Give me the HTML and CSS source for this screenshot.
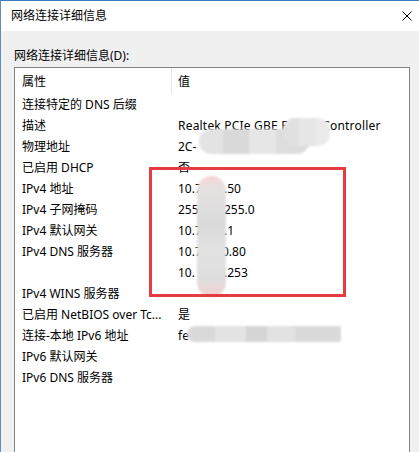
FILE: index.html
```html
<!DOCTYPE html>
<html lang="zh-CN">
<head>
<meta charset="utf-8">
<title>网络连接详细信息</title>
<link rel="stylesheet" href="styles.css">
</head>
<body>
<div class="window">
  <div class="titlebar">
    <span class="title">网络连接详细信息</span>
    <svg class="close" width="10" height="10" viewBox="0 0 10 10"><path d="M0.5 0.5 L9.5 9.5 M9.5 0.5 L0.5 9.5" stroke="#000" stroke-width="1" fill="none"/></svg>
  </div>
  <div class="body">
    <div class="label">网络连接详细信息(D):</div>
    <div class="listbox">
      <div class="header">
        <div class="hcol1">属性</div>
        <div class="hcol2">值</div>
      </div>
      <div class="row"><div class="c1">连接特定的 DNS 后缀</div><div class="c2"></div></div>
      <div class="row"><div class="c1">描述</div><div class="c2 wide">Realtek PCIe GBE Family Controller</div></div>
      <div class="row"><div class="c1">物理地址</div><div class="c2">2C-</div></div>
      <div class="row"><div class="c1">已启用 DHCP</div><div class="c2">否</div></div>
      <div class="row"><div class="c1">IPv4 地址</div><div class="c2"><span class="head">10.7</span><span>.50</span></div></div>
      <div class="row"><div class="c1">IPv4 子网掩码</div><div class="c2"><span class="head">255</span><span>255.0</span></div></div>
      <div class="row"><div class="c1">IPv4 默认网关</div><div class="c2"><span class="head">10.7</span><span>.1</span></div></div>
      <div class="row"><div class="c1">IPv4 DNS 服务器</div><div class="c2"><span class="head">10.7</span><span class="tail-wide">0.80</span></div></div>
      <div class="row"><div class="c1"></div><div class="c2"><span class="head">10.</span><span>.253</span></div></div>
      <div class="row"><div class="c1">IPv4 WINS 服务器</div><div class="c2"></div></div>
      <div class="row"><div class="c1">已启用 NetBIOS over Tc...</div><div class="c2">是</div></div>
      <div class="row"><div class="c1">连接-本地 IPv6 地址</div><div class="c2">fe</div></div>
      <div class="row"><div class="c1">IPv6 默认网关</div><div class="c2"></div></div>
      <div class="row"><div class="c1">IPv6 DNS 服务器</div><div class="c2"></div></div>
    </div>
  </div>

  <div class="blob blob-desc-a"></div>
  <div class="blob blob-desc-b"></div>
  <div class="blob blob-ipv6"></div>
  <div class="blob blob-vert"></div>
  <div class="highlight"></div>
</div>
</body>
</html>
```

FILE: styles.css
```css
html, body {
  margin: 0;
  padding: 0;
  background: #f0f0f0;
}

.window {
  position: relative;
  width: 418px;
  height: 451px;
  overflow: hidden;
  border-top: 1px solid #3b7cc0;
  border-left: 1px solid #5f8fbd;
  background: #f0f0f0;
  font-family: "Noto Sans", "Noto Sans CJK SC", sans-serif;
  font-size: 12px;
  color: #000;
}

.titlebar {
  height: 30px;
  background: #ffffff;
  display: flex;
  align-items: center;
  justify-content: space-between;
  padding: 0 7px 0 10px;
}

.title {
  line-height: 16px;
}

.close {
  display: block;
}

.body {
  padding: 17px 9px 0 13px;
}

.label {
  line-height: 16px;
  height: 16px;
}

.listbox {
  margin-top: 3px;
  height: 420px;
  border: 1px solid #838383;
  background: #ffffff;
}

.header {
  display: flex;
  height: 26px;
}

.hcol1 {
  width: 149px;
  padding-left: 7px;
  padding-top: 2px;
  border-right: 1px solid #e5e5e5;
  line-height: 24px;
}

.hcol2 {
  padding-left: 6px;
  padding-top: 2px;
  line-height: 24px;
}

.row {
  display: flex;
  height: 21px;
  line-height: 21px;
}

.c1 {
  width: 150px;
  padding-left: 7px;
  white-space: nowrap;
  overflow: hidden;
}

.c2 {
  padding-left: 6px;
  white-space: nowrap;
}

.wide {
  letter-spacing: 0.2px;
}

.head {
  display: inline-block;
  width: 46px;
}

.tail-wide {
  margin-left: -2px;
}

.blob {
  position: absolute;
  filter: blur(1px);
}

.blob-desc-a {
  left: 198px;
  top: 128px;
  width: 110px;
  height: 25px;
  border-radius: 12px;
  background: linear-gradient(90deg, #e3e3e3 0 22%, #d9d9d9 22% 45%, #e6e6e6 45% 70%, #dddddd 70%);
}

.blob-desc-b {
  left: 282px;
  top: 117px;
  width: 47px;
  height: 28px;
  border-radius: 12px;
  background: linear-gradient(90deg, #e0e0e0 0 35%, #e6e6e6 35% 70%, #ebebeb 70%);
}

.blob-ipv6 {
  left: 186px;
  top: 325px;
  width: 154px;
  height: 16px;
  border-radius: 8px 2px 2px 8px;
  background: linear-gradient(90deg, #d9d9d9 0 18%, #e3e3e3 18% 38%, #d5d5d5 38% 52%, #e2e2e2 52% 70%, #dadada 70%);
}

.blob-vert {
  left: 196px;
  top: 175px;
  width: 29px;
  height: 121px;
  border-radius: 15px;
  background: linear-gradient(180deg, #f6d3d3 0, #e6e2e2 12px, #dadada 40%, #e3e3e3 60%, #dedede 85%, #f5d0d0 100%);
}

.highlight {
  position: absolute;
  left: 148px;
  top: 166px;
  width: 191px;
  height: 124px;
  border: 3px solid #e43c40;
}
```
